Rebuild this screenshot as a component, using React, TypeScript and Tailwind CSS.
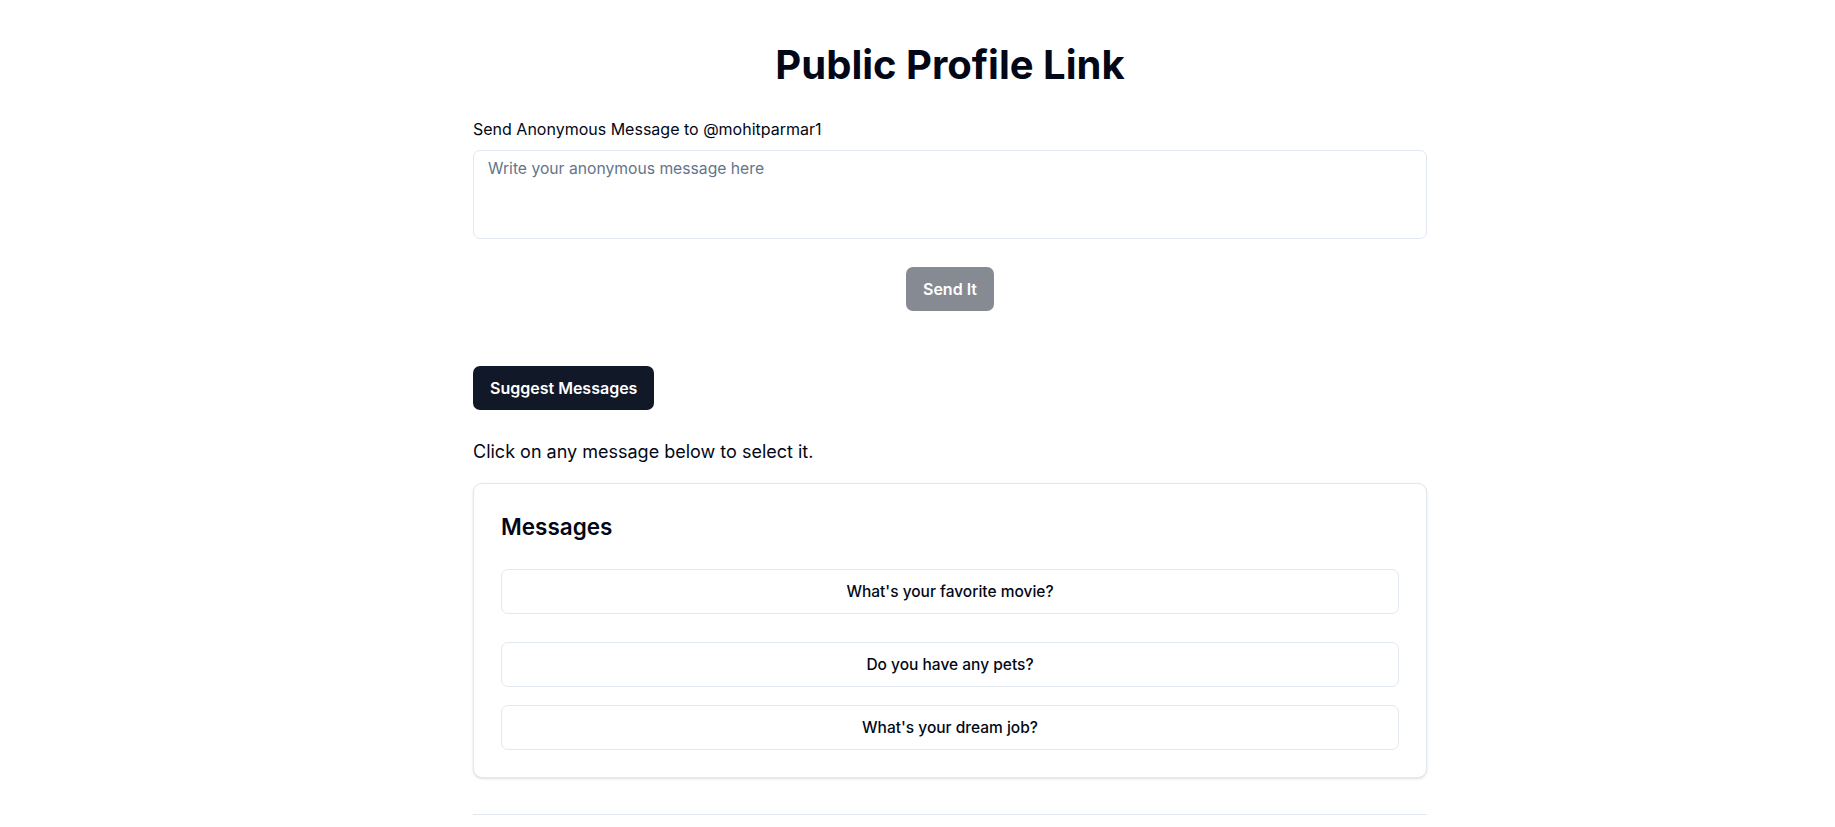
export default function App() {
  const messages = [
    "What's your favorite movie?",
    "Do you have any pets?",
    "What's your dream job?",
  ];

  return (
    <div className="min-h-screen bg-white pl-[65px] pt-[42px] font-['Inter',sans-serif] text-[#020817]">
      <div className="mx-auto w-full max-w-[954px]">
        {/* Title */}
        <h1 className="text-center text-[40px] font-bold leading-[46px]">
          Public Profile Link
        </h1>

        {/* Message form */}
        <div className="mt-[33px]">
          <label className="block text-[16px] font-normal leading-[17px]">
            Send Anonymous Message to @mohitparmar1
          </label>
          <textarea
            placeholder="Write your anonymous message here"
            className="mt-[12px] block h-[89px] w-full resize-none rounded-[7px] border border-[#e2e8f0] px-[14px] py-[6px] text-[15.7px] leading-[24px] placeholder:text-[#64748b] focus:outline-none"
          />
          <div className="mt-[28px] flex justify-center">
            <button
              disabled
              className="h-[44px] rounded-[7px] bg-[#0f172a] px-[17px] text-[16px] font-semibold text-white opacity-50"
            >
              Send It
            </button>
          </div>
        </div>

        {/* Suggestions */}
        <div className="mt-[55px]">
          <button className="h-[44px] rounded-[7px] bg-[#111827] px-[17px] text-[16px] font-semibold text-white">
            Suggest Messages
          </button>
          <p className="mt-[29px] text-[18px] leading-[25px]">
            Click on any message below to select it.
          </p>
        </div>

        <div className="mt-[19px] rounded-[9px] border border-[#e2e8f0] bg-white p-[27px] shadow-sm">
          <h3 className="text-[22.5px] font-semibold leading-[32px]">Messages</h3>
          <div className="mt-[26px] flex flex-col">
            {messages.map((m, i) => (
              <button
                key={m}
                className={
                  "h-[45px] w-full rounded-[7px] border border-[#e2e8f0] bg-white text-[15.5px] font-medium " +
                  (i === 1 ? "mt-[28px]" : i === 2 ? "mt-[18px]" : "")
                }
              >
                {m}
              </button>
            ))}
          </div>
        </div>

        <div className="mt-[36px] border-t border-[#e2e8f0]" />
      </div>
    </div>
  );
}
